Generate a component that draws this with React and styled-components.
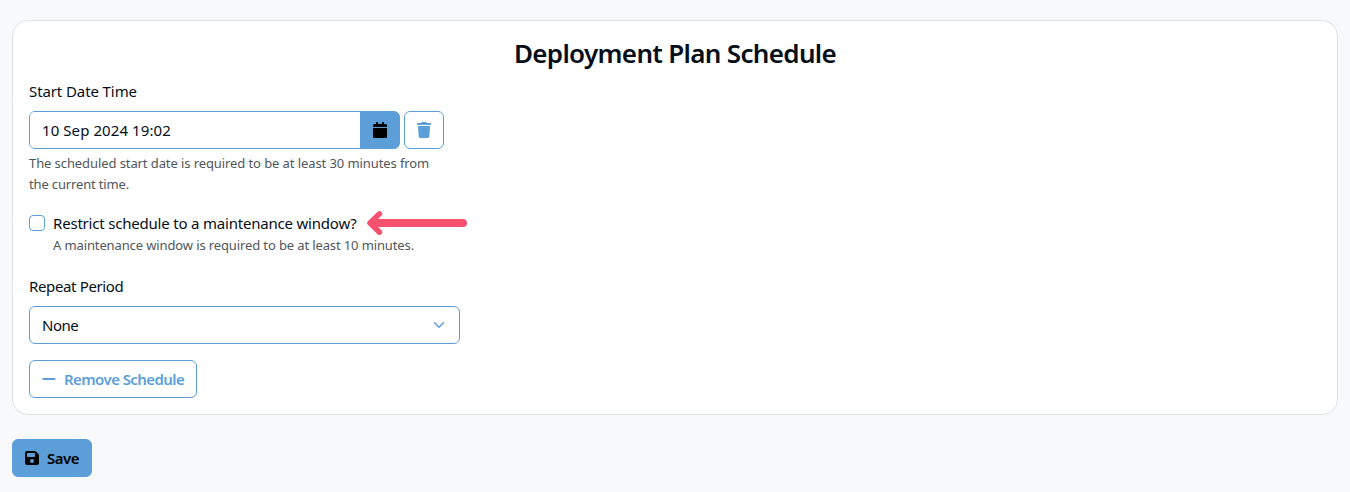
import React from "react";
import styled, { createGlobalStyle } from "styled-components";
import { FaCalendar, FaTrash, FaMinus, FaFloppyDisk } from "react-icons/fa6";

const GlobalStyle = createGlobalStyle`
  *, *::before, *::after { box-sizing: border-box; }
  body {
    margin: 0;
    background: #f8f9fb;
    color: #050e17;
    font-family: "Noto Sans", "Open Sans", sans-serif;
    font-size: 15px;
    line-height: 24px;
  }
  button, input { font: inherit; }
`;

const Page = styled.main`
  padding: 20px 12px 15px;
`;

const Card = styled.section`
  display: flex;
  flex-direction: column;
  align-items: flex-start;
  padding: 16px;
  background: #fff;
  border: 1px solid #dee2e6;
  border-radius: 16px;
`;

const Title = styled.h3`
  align-self: stretch;
  margin: 0 0 10px;
  text-align: center;
  font-size: 26px;
  font-weight: 600;
  line-height: 32px;
  letter-spacing: -0.67px;
`;

const Text = styled.span`
  display: block;
  white-space: nowrap;
  letter-spacing: ${(p) => p.$track || 0}px;
`;

const Label = styled(Text)`
  margin-bottom: 8px;
`;

const Help = styled.div`
  color: #50565c;
  font-size: 13px;
  line-height: 21px;
`;

const DateRow = styled.div`
  display: flex;
  gap: 4px;
  margin-bottom: 4px;
`;

const DateField = styled.div`
  display: flex;
  width: 371px;
  height: 38px;
  border: 1px solid #5c9fd8;
  border-radius: 6px;
  background: linear-gradient(to right, #fff 50%, #5c9fd8 50%);
  overflow: hidden;
`;

const DateValue = styled.div`
  flex: 1;
  padding: 6px 12px;
  background: #fff;
`;

const CalendarButton = styled.button`
  display: flex;
  align-items: center;
  justify-content: center;
  width: 39px;
  padding: 0;
  border: 0;
  background: #5c9fd8;
  color: #000;
  font-size: 16px;
`;

const Button = styled.button`
  display: flex;
  align-items: center;
  gap: 8px;
  height: 38px;
  padding: 0 12px;
  border: 1px solid #5c9fd8;
  border-radius: 6px;
  background: ${(p) => (p.$solid ? "#5c9fd8" : "#fff")};
  color: ${(p) => (p.$solid ? "#000" : "#5c9fd8")};
  font-weight: 600;
  svg { font-size: 16px; width: 14px; flex: none; }
`;

const CheckRow = styled.div`
  display: flex;
  gap: 8px;
  margin: 16px 0 18px;
`;

const Checkbox = styled.input`
  appearance: none;
  width: 16px;
  height: 16px;
  margin: 4px 0 0;
  border: 1px solid #5c9fd8;
  border-radius: 4px;
  background: #fff;
`;

const CheckLine = styled.div`
  display: flex;
  align-items: center;
  gap: 10px;
  height: 24px;
`;

const CheckLabel = styled(Text)`
  width: 304px;
`;

const Select = styled.div`
  display: flex;
  align-items: center;
  justify-content: space-between;
  width: 431px;
  height: 38px;
  margin-bottom: 16px;
  padding: 0 14px 0 12px;
  border: 1px solid #5c9fd8;
  border-radius: 6px;
`;

const Footer = styled.div`
  display: flex;
  margin-top: 24px;
`;

const Arrow = () => (
  <svg width="100" height="26" viewBox="0 0 100 26" fill="none" stroke="#f6516f" strokeLinecap="round" strokeLinejoin="round">
    <path d="M96 13H7" strokeWidth="8" />
    <path d="M12.5 3.8 3 13l9.5 9.2" strokeWidth="5.5" />
  </svg>
);

const Chevron = () => (
  <svg width="12" height="12" viewBox="0 0 16 16" fill="none" stroke="#5c9fd8" strokeWidth="2" strokeLinecap="round" strokeLinejoin="round">
    <path d="m2 5 6 6 6-6" />
  </svg>
);

export default function App() {
  return (
    <>
      <GlobalStyle />
      <Page>
        <Card>
          <Title>Deployment Plan Schedule</Title>
          <Label $track={-0.1}>Start Date Time</Label>
          <DateRow>
            <DateField>
              <DateValue><Text $track={0.08}>10 Sep 2024 19:02</Text></DateValue>
              <CalendarButton aria-label="Choose date"><FaCalendar /></CalendarButton>
            </DateField>
            <Button aria-label="Clear date"><FaTrash /></Button>
          </DateRow>
          <Help>
            <Text $track={-0.09}>The scheduled start date is required to be at least 30 minutes from</Text>
            <Text $track={-0.15}>the current time.</Text>
          </Help>
          <CheckRow>
            <Checkbox type="checkbox" id="restrict" />
            <div>
              <CheckLine>
                <CheckLabel as="label" htmlFor="restrict" $track={-0.2}>Restrict schedule to a maintenance window?</CheckLabel>
                <Arrow />
              </CheckLine>
              <Help><Text $track={-0.12}>A maintenance window is required to be at least 10 minutes.</Text></Help>
            </div>
          </CheckRow>
          <Label $track={-0.36}>Repeat Period</Label>
          <Select><Text $track={-0.5}>None</Text><Chevron /></Select>
          <Button><FaMinus /><Text $track={-0.57}>Remove Schedule</Text></Button>
        </Card>
        <Footer>
          <Button $solid><FaFloppyDisk /><Text $track={-0.5}>Save</Text></Button>
        </Footer>
      </Page>
    </>
  );
}
